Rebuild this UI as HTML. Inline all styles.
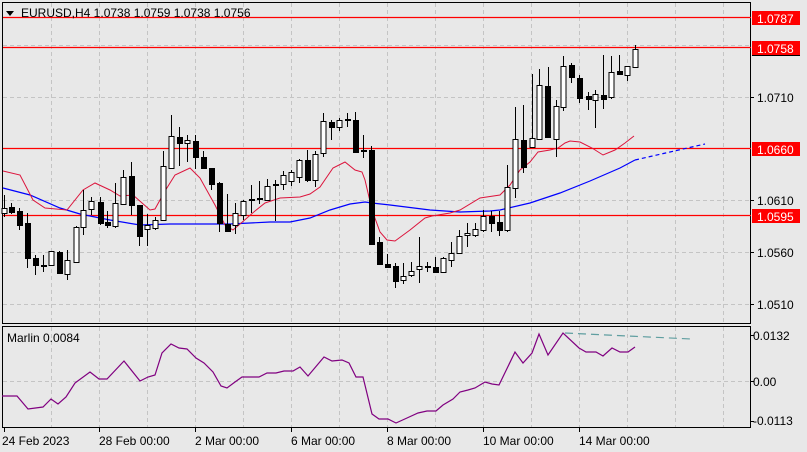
<!DOCTYPE html>
<html><head><meta charset="utf-8"><style>
html,body{margin:0;padding:0;background:#e8e8e8;}
svg{display:block;font-family:"Liberation Sans",sans-serif;font-size:12px;}
</style></head><body>
<svg width="807" height="452" viewBox="0 0 807 452" xmlns="http://www.w3.org/2000/svg">
<rect width="807" height="452" fill="#e8e8e8"/>
<g stroke="#c4c4c4" stroke-dasharray="4,3" stroke-width="1">
<path d="M51.5 3V323M99.5 3V323M147.5 3V323M195.5 3V323M243.5 3V323M291.5 3V323M339.5 3V323M387.5 3V323M435.5 3V323M483.5 3V323M531.5 3V323M579.5 3V323M627.5 3V323M675.5 3V323M723.5 3V323"/>
<path d="M51.5 327V427M99.5 327V427M147.5 327V427M195.5 327V427M243.5 327V427M291.5 327V427M339.5 327V427M387.5 327V427M435.5 327V427M483.5 327V427M531.5 327V427M579.5 327V427M627.5 327V427M675.5 327V427M723.5 327V427"/>
<path d="M3 45.5H750M3 97.5H750M3 148.5H750M3 200.5H750M3 252.5H750M3 304.5H750M3 381.5H750"/>
</g>
<rect x="2.5" y="2.5" width="748" height="321" fill="none" stroke="#000"/>
<rect x="2.5" y="326.5" width="748" height="101" fill="none" stroke="#000"/>
<g stroke="#ff0000" stroke-width="1.2">
<path d="M3 17.5H751M3 47.5H751M3 148.5H751M3 215.5H751"/>
</g>
<polyline fill="none" stroke="#0000ff" stroke-width="1.2" points="3,188 30,195 60,208 80,214 110,220 140,225 170,224 200,224 230,224 270,222 290,222 310,218 330,210 350,204 365,202 372,203 390,205 430,210 460,212 490,211 500,210 530,203 560,193 590,181 620,168 635,160"/>
<polyline fill="none" stroke="#0000ff" stroke-width="1.2" stroke-dasharray="4,3" points="635,160 670,152 705,144"/>
<polyline fill="none" stroke="#dc143c" stroke-width="1" points="3,171 20,175 33,200 45,208 67,210 83,190 95,183 110,190 120,196 133,195 150,210 155,209 165,191 175,175 190,168 200,178 215,205 225,225 233,230 240,224 255,211 265,203 280,198 300,197 310,194 320,187 333,168 345,162 355,170 362,172 365,180 372,210 380,232 387,240 395,241 410,230 425,218 432,216 450,213 460,210 480,198 500,195 510,185 520,170 530,162 538,152 550,150 558,148 565,143 570,141 580,142 592,148 603,155 615,150 625,143 634,136"/>
<g stroke="#000" stroke-width="1">
<path d="M4.5 195V217M11.5 203V214M19.5 208V230M27.5 213V268M35.5 255V275M43.5 255V272M51.5 251V266M59.5 251V273M67.5 250V280M76.5 226V262M83.5 190V235M91.5 197V215M100.5 197V225M107.5 211V228M115.5 183V228M123.5 170V205M131.5 162V215M139.5 205V246M147.5 214V246M155.5 217V230M163.5 151V221M171.5 115V168M179.5 127V166M187.5 135V162M195.5 135V169M203.5 151V168M211.5 168V190M219.5 182V232M227.5 194V232M235.5 203V234M243.5 200V220M251.5 185V213M259.5 181V204M267.5 179V200M275.5 180V221M283.5 171V190M291.5 170V186M299.5 159V183M307.5 150V182M315.5 151V187M323.5 113V157M331.5 120V140M339.5 118V131M347.5 113V127M355.5 112V152M363.5 135V158M371.5 146V245M379.5 237V265M387.5 254V268M395.5 263V288M403.5 263V284M411.5 262V277M419.5 237V283M427.5 262V272M435.5 257V273M443.5 257V272M451.5 242V267M459.5 230V253M467.5 223V247M475.5 223V237M483.5 210V232M491.5 211V232M499.5 211V236M507.5 165V232M515.5 107V198M523.5 105V173M532.5 74V148M539.5 69V140M548.5 67V138M556.5 100V157M563.5 56V111M571.5 63V83M579.5 75V103M588.5 92V110M595.5 90V128M603.5 55V109M611.5 56V99M619.5 55V74M627.5 66V81M635.5 45V67"/>
</g>
<g stroke="#000" stroke-width="1" fill="#fff">
<rect x="2" y="208.5" width="5" height="5"/>
<rect x="49" y="251.5" width="5" height="14"/>
<rect x="65" y="260.5" width="5" height="14"/>
<rect x="74" y="227.5" width="5" height="35"/>
<rect x="81" y="210.5" width="5" height="17"/>
<rect x="89" y="201.5" width="5" height="8"/>
<rect x="113" y="203.5" width="5" height="23"/>
<rect x="121" y="177.5" width="5" height="27"/>
<rect x="145" y="225.5" width="5" height="4"/>
<rect x="153" y="220.5" width="5" height="8"/>
<rect x="161" y="166.5" width="5" height="54"/>
<rect x="169" y="136.5" width="5" height="32"/>
<rect x="185" y="140.5" width="5" height="3"/>
<rect x="233" y="213.5" width="5" height="12"/>
<rect x="241" y="201.5" width="5" height="14"/>
<rect x="265" y="186.5" width="5" height="14"/>
<rect x="281" y="175.5" width="5" height="9"/>
<rect x="289" y="172.5" width="5" height="9"/>
<rect x="297" y="160.5" width="5" height="17"/>
<rect x="313" y="154.5" width="5" height="26"/>
<rect x="321" y="121.5" width="5" height="32"/>
<rect x="337" y="120.5" width="5" height="7"/>
<rect x="401" y="276.5" width="5" height="4"/>
<rect x="409" y="271.5" width="5" height="4"/>
<rect x="417" y="266.5" width="5" height="3"/>
<rect x="441" y="258.5" width="5" height="14"/>
<rect x="449" y="253.5" width="5" height="7"/>
<rect x="457" y="236.5" width="5" height="17"/>
<rect x="465" y="233.5" width="5" height="2"/>
<rect x="473" y="229.5" width="5" height="6"/>
<rect x="481" y="216.5" width="5" height="14"/>
<rect x="505" y="187.5" width="5" height="43"/>
<rect x="513" y="139.5" width="5" height="49"/>
<rect x="530" y="138.5" width="5" height="9"/>
<rect x="537" y="85.5" width="5" height="54"/>
<rect x="554" y="106.5" width="5" height="33"/>
<rect x="561" y="66.5" width="5" height="41"/>
<rect x="593" y="94.5" width="5" height="6"/>
<rect x="609" y="72.5" width="5" height="25"/>
<rect x="625" y="66.5" width="5" height="9"/>
<rect x="633" y="49.5" width="5" height="18"/>
</g>
<g fill="#000">
<rect x="9" y="207" width="6" height="6"/>
<rect x="17" y="211" width="6" height="15"/>
<rect x="25" y="223" width="6" height="36"/>
<rect x="33" y="258" width="6" height="8"/>
<rect x="41" y="265" width="6" height="2"/>
<rect x="57" y="252" width="6" height="22"/>
<rect x="98" y="202" width="6" height="22"/>
<rect x="105" y="222" width="6" height="4"/>
<rect x="129" y="176" width="6" height="30"/>
<rect x="137" y="205" width="6" height="32"/>
<rect x="177" y="137" width="6" height="7"/>
<rect x="193" y="141" width="6" height="17"/>
<rect x="201" y="157" width="6" height="12"/>
<rect x="209" y="168" width="6" height="17"/>
<rect x="217" y="183" width="6" height="41"/>
<rect x="225" y="224" width="6" height="8"/>
<rect x="249" y="199" width="6" height="2"/>
<rect x="257" y="198" width="6" height="2"/>
<rect x="273" y="184" width="6" height="2"/>
<rect x="305" y="160" width="6" height="21"/>
<rect x="329" y="122" width="6" height="6"/>
<rect x="345" y="119" width="6" height="2"/>
<rect x="353" y="120" width="6" height="33"/>
<rect x="361" y="150" width="6" height="2"/>
<rect x="369" y="150" width="6" height="95"/>
<rect x="377" y="242" width="6" height="23"/>
<rect x="385" y="264" width="6" height="4"/>
<rect x="393" y="266" width="6" height="16"/>
<rect x="425" y="266" width="6" height="2"/>
<rect x="433" y="267" width="6" height="6"/>
<rect x="489" y="216" width="6" height="8"/>
<rect x="497" y="222" width="6" height="9"/>
<rect x="521" y="140" width="6" height="28"/>
<rect x="545" y="86" width="6" height="52"/>
<rect x="569" y="65" width="6" height="13"/>
<rect x="577" y="78" width="6" height="21"/>
<rect x="586" y="96" width="6" height="4"/>
<rect x="601" y="95" width="6" height="5"/>
<rect x="617" y="71" width="6" height="4"/>
</g>
<path d="M6 11H14L10 16Z" fill="#000"/>
<text x="21" y="17" fill="#000">EURUSD,H4  1.0738 1.0759 1.0738 1.0756</text>
<g stroke="#000"><path d="M750 97.5H754M750 200.5H754M750 252.5H754M750 304.5H754M750 335.5H754M750 381.5H754M750 421.5H754"/></g>
<g fill="#000">
<text x="757" y="102">1.0710</text>
<text x="757" y="205">1.0610</text>
<text x="757" y="257">1.0560</text>
<text x="757" y="309">1.0510</text>
<text x="753" y="340">0.0132</text>
<text x="753" y="386">0.00</text>
<text x="753" y="425">-0.0113</text>
</g>
<rect x="752" y="11" width="48" height="14" fill="#ff0000"/>
<rect x="752" y="41" width="48" height="14" fill="#ff0000"/>
<path d="M752 55.5H800" stroke="#000"/>
<rect x="752" y="142" width="48" height="14" fill="#ff0000"/>
<rect x="752" y="209" width="48" height="14" fill="#ff0000"/>
<g fill="#fff"><text x="757" y="23">1.0787</text><text x="757" y="53">1.0758</text><text x="757" y="154">1.0660</text><text x="757" y="221">1.0595</text></g>
<text x="7" y="342" fill="#000">Marlin 0.0084</text>
<polyline fill="none" stroke="#800080" stroke-width="1.2" points="2,396 17,396 28,409 43,407 51,399 58,404 66,397 75,383 90,372 99,379 107,379 124,361 140,381 148,377 155,375 162,353 171,344 179,348 187,349 196,358 204,363 213,372 221,386 227,388 235,382 242,377 259,377 267,373 276,373 284,371 293,371 300,367 308,376 324,357 332,361 342,360 349,363 356,377 363,377 372,414 379,419 388,419 396,423 407,418 418,413 427,411 436,411 443,405 453,399 460,392 468,390 475,388 485,382 492,384 499,385 515,352 523,363 532,353 539,334 548,355 563,333 579,348 586,352 596,352 603,356 612,348 620,352 628,352 635,347"/>
<polyline fill="none" stroke="#5f9ea0" stroke-width="1.2" stroke-dasharray="8,5" points="565,333 691,339"/>
<g stroke="#000"><path d="M4.5 428V432M99.5 428V432M195.5 428V432M291.5 428V432M387.5 428V432M483.5 428V432M579.5 428V432"/></g>
<g fill="#000">
<text x="2" y="445">24 Feb 2023</text>
<text x="99" y="445">28 Feb 00:00</text>
<text x="195" y="445">2 Mar 00:00</text>
<text x="291" y="445">6 Mar 00:00</text>
<text x="387" y="445">8 Mar 00:00</text>
<text x="483" y="445">10 Mar 00:00</text>
<text x="579" y="445">14 Mar 00:00</text>
</g>
</svg>
</body></html>
